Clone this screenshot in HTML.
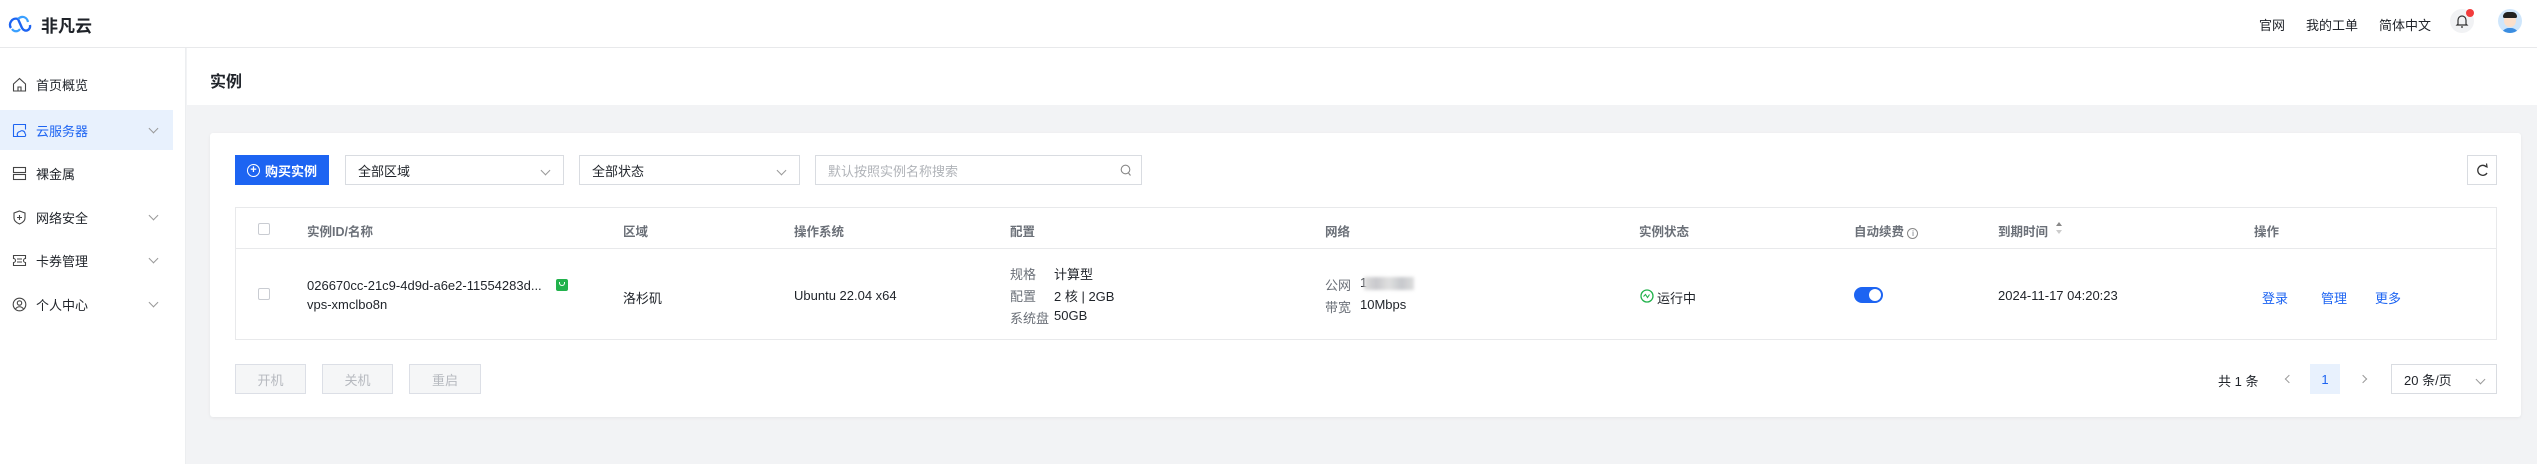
<!DOCTYPE html>
<html><head><meta charset="utf-8"><style>
*{box-sizing:border-box;margin:0;padding:0}
body{width:2537px;height:464px;overflow:hidden;background:#f2f3f5;font-family:"Liberation Sans","Noto Sans CJK SC",sans-serif;font-size:13px;color:#1f2329;position:relative}
.abs{position:absolute}
.hdr{left:0;top:0;width:2537px;height:48px;background:#fff;border-bottom:1px solid #e8e9eb}
.side{left:0;top:48px;width:186px;height:416px;background:#fff;border-right:1px solid #eceef0}
.nav{position:absolute;left:0;width:173px;height:40px;display:flex;align-items:center;padding-left:12px;font-size:13px;color:#1f2329}
.nav svg{margin-right:9px}
.chev{position:absolute;right:16px;top:15px;width:7px;height:7px;border-right:1px solid #999;border-bottom:1px solid #999;transform:rotate(45deg)}
.btn{position:absolute;border:1px solid #dcdfe6;background:#f5f6f7;color:#b6b9bf;display:flex;align-items:center;justify-content:center;font-size:13px}
.sel{position:absolute;top:155px;height:30px;border:1px solid #d9dce1;background:#fff;display:flex;align-items:center;padding-left:12px;font-size:13px}
.th{position:absolute;top:221px;color:#6b7078;font-size:12.5px;font-weight:bold}
.td{position:absolute;font-size:13px}
.lbl{color:#6b7078}
.cb{position:absolute;width:12px;height:12px;border:1px solid #c9ccd2;border-radius:2px;background:#fff}
.pg{position:absolute;width:6px;height:6px;border-left:1px solid #999;border-bottom:1px solid #999}
</style></head><body>
<div class="abs hdr">
  <svg class="abs" style="left:8px;top:14px" width="24" height="20" viewBox="0 0 24 20"><path d="M3 14c-3-4 1-11 7-9l4 9c3 5 9 2 8-3" fill="none" stroke="#1d64f2" stroke-width="2.4"/><path d="M10 5c4-4 9-2 10 3M4 15c2 3 6 3 8 0" fill="none" stroke="#3aa0ff" stroke-width="2.2"/></svg>
  <div class="abs" style="left:41px;top:12px;font-size:17px;font-weight:bold">非凡云</div>
  <div class="abs" style="left:2259px;top:15px;font-size:13px">官网</div>
  <div class="abs" style="left:2306px;top:15px;font-size:13px">我的工单</div>
  <div class="abs" style="left:2379px;top:15px;font-size:13px">简体中文</div>
  <div class="abs" style="left:2450px;top:9px;width:24px;height:24px;border-radius:12px;background:#f1f2f4"></div>
  <svg class="abs" style="left:2455px;top:13px" width="14" height="16" viewBox="0 0 14 16"><path d="M3 11V7a4 4 0 0 1 8 0v4l1 1H2zM6 14h2" fill="none" stroke="#333" stroke-width="1.2"/></svg>
  <div class="abs" style="left:2466px;top:9px;width:8px;height:8px;border-radius:4px;background:#f23c3c"></div>
  <div class="abs" style="left:2498px;top:9px;width:24px;height:24px;border-radius:12px;background:#cfe6fb;overflow:hidden">
    <div class="abs" style="left:6px;top:5px;width:12px;height:13px;border-radius:6px;background:#fbe0cc"></div>
    <div class="abs" style="left:5px;top:3px;width:14px;height:6px;border-radius:6px 6px 2px 2px;background:#222"></div>
    <div class="abs" style="left:3px;top:19px;width:18px;height:8px;border-radius:8px 8px 0 0;background:#3b8de0"></div>
  </div>
</div>
<div class="abs side">
  <div class="nav" style="top:16px"><svg width="15" height="15" viewBox="0 0 15 15"><path d="M1.5 7L7.5 1.5 13.5 7V14h-12zM6 14v-4h3v4" fill="none" stroke="#444" stroke-width="1.1"/></svg>首页概览</div>
  <div class="nav" style="top:62px;background:#e8f1fd;color:#1d64f2"><svg width="15" height="15" viewBox="0 0 15 15"><path d="M1.5 1.5h12v5M1.5 1.5v12h4" fill="none" stroke="#1d64f2" stroke-width="1.1"/><path d="M6 13.5a3 3 0 0 1 2-5 3 3 0 0 1 5 2 2 2 0 0 1 0 3z" fill="none" stroke="#1d64f2" stroke-width="1.1"/></svg>云服务器<span class="chev"></span></div>
  <div class="nav" style="top:105px"><svg width="15" height="15" viewBox="0 0 15 15"><rect x="1.5" y="1.5" width="12" height="5" fill="none" stroke="#444" stroke-width="1.1"/><rect x="1.5" y="8.5" width="12" height="5" fill="none" stroke="#444" stroke-width="1.1"/></svg>裸金属</div>
  <div class="nav" style="top:149px"><svg width="15" height="15" viewBox="0 0 15 15"><path d="M7.5 1L13 3v5c0 3-3 5-5.5 6C5 13 2 11 2 8V3z M7.5 5v5M5 7.5h5" fill="none" stroke="#444" stroke-width="1.1"/></svg>网络安全<span class="chev"></span></div>
  <div class="nav" style="top:192px"><svg width="15" height="15" viewBox="0 0 15 15"><path d="M1.5 2.5h12v3a2 2 0 0 0 0 4v3h-12v-3a2 2 0 0 0 0-4zM5 6h5M5 9h5" fill="none" stroke="#444" stroke-width="1.1"/></svg>卡券管理<span class="chev"></span></div>
  <div class="nav" style="top:236px"><svg width="15" height="15" viewBox="0 0 15 15"><circle cx="7.5" cy="7.5" r="6.3" fill="none" stroke="#444" stroke-width="1.1"/><circle cx="7.5" cy="6" r="2.2" fill="none" stroke="#444" stroke-width="1.1"/><path d="M3.5 12c2-3 6-3 8 0" fill="none" stroke="#444" stroke-width="1.1"/></svg>个人中心<span class="chev"></span></div>
</div>
<div class="abs" style="left:187px;top:48px;width:2350px;height:57px;background:#fff"></div>
<div class="abs" style="left:210px;top:68px;font-size:16px;font-weight:bold">实例</div>
<div class="abs" style="left:210px;top:133px;width:2311px;height:284px;background:#fff;border-radius:3px;box-shadow:0 1px 3px rgba(0,0,0,.06)"></div>
<div class="abs" style="left:235px;top:155px;width:94px;height:30px;background:#1d64f2;color:#fff;font-weight:bold;display:flex;align-items:center;justify-content:center;font-size:13px"><span style="width:13px;height:13px;border:1.3px solid #fff;border-radius:7px;display:inline-flex;align-items:center;justify-content:center;font-size:11px;margin-right:5px;line-height:1">+</span>购买实例</div>
<div class="sel" style="left:345px;width:219px">全部区域<span class="chev" style="top:11px;right:14px"></span></div>
<div class="sel" style="left:579px;width:221px">全部状态<span class="chev" style="top:11px;right:14px"></span></div>
<div class="sel" style="left:815px;width:327px;color:#b0b3b8">默认按照实例名称搜索
  <svg class="abs" style="right:9px;top:8px" width="12" height="13" viewBox="0 0 12 13"><circle cx="5.5" cy="5.5" r="4.3" fill="none" stroke="#888" stroke-width="1.1"/><path d="M8.5 9l2 2.5" stroke="#888" stroke-width="1.1"/></svg></div>
<div class="abs" style="left:2467px;top:155px;width:30px;height:30px;border:1px solid #d9dce1;background:#fff"><svg class="abs" style="left:8px;top:7px" width="13" height="15" viewBox="0 0 13 15"><path d="M10.5 4A5 5 0 1 0 11 10" fill="none" stroke="#333" stroke-width="1.3"/><path d="M8 2.5l3 1.5-.5-3.5" fill="none" stroke="#333" stroke-width="1.2"/></svg></div>
<div class="abs" style="left:235px;top:207px;width:2262px;height:133px;border:1px solid #e8e9eb"></div>
<div class="abs" style="left:235px;top:248px;width:2262px;height:1px;background:#e8e9eb"></div>
<div class="cb" style="left:258px;top:223px"></div>
<div class="th" style="left:307px">实例ID/名称</div>
<div class="th" style="left:623px">区域</div>
<div class="th" style="left:794px">操作系统</div>
<div class="th" style="left:1010px">配置</div>
<div class="th" style="left:1325px">网络</div>
<div class="th" style="left:1639px">实例状态</div>
<div class="th" style="left:1854px">自动续费 <span style="display:inline-block;width:11px;height:11px;border:1px solid #888;border-radius:6px;font-size:8px;text-align:center;line-height:9px;font-weight:normal">i</span></div>
<div class="th" style="left:1998px">到期时间</div>
<svg class="abs" style="left:2056px;top:222px" width="6" height="12" viewBox="0 0 6 12"><path d="M3 0L6 4H0z" fill="#888"/><path d="M3 12L6 8H0z" fill="#ccc"/></svg>
<div class="th" style="left:2254px">操作</div>
<div class="cb" style="left:258px;top:288px"></div>
<div class="td" style="left:307px;top:278px">026670cc-21c9-4d9d-a6e2-11554283d...</div>
<div class="abs" style="left:556px;top:279px;width:12px;height:12px;background:#22b24c;border-radius:2px"><div class="abs" style="left:3px;top:3px;width:6px;height:4px;border:1.3px solid #fff;border-top:none;border-radius:0 0 3px 3px"></div></div>
<div class="td" style="left:307px;top:297px">vps-xmclbo8n</div>
<div class="td" style="left:623px;top:288px">洛杉矶</div>
<div class="td" style="left:794px;top:288px">Ubuntu 22.04 x64</div>
<div class="td lbl" style="left:1010px;top:264px">规格</div><div class="td" style="left:1054px;top:264px">计算型</div>
<div class="td lbl" style="left:1010px;top:286px">配置</div><div class="td" style="left:1054px;top:286px">2 核 | 2GB</div>
<div class="td lbl" style="left:1010px;top:308px">系统盘</div><div class="td" style="left:1054px;top:308px">50GB</div>
<div class="td lbl" style="left:1325px;top:275px">公网</div><div class="td" style="left:1360px;top:275px">1</div>
<div class="abs" style="left:1364px;top:277px;width:50px;height:13px;background:linear-gradient(90deg,#ddd,#c8c8cc,#e0e0e0,#c6c8cc,#ddd);filter:blur(1.5px)"></div>
<div class="td lbl" style="left:1325px;top:297px">带宽</div><div class="td" style="left:1360px;top:297px">10Mbps</div>
<svg class="abs" style="left:1640px;top:289px" width="14" height="14" viewBox="0 0 14 14"><circle cx="7" cy="7" r="6" fill="none" stroke="#22b24c" stroke-width="1.3"/><path d="M3.5 7.5l2-2 2 3 2-3" fill="none" stroke="#22b24c" stroke-width="1.1"/></svg>
<div class="td" style="left:1657px;top:288px">运行中</div>
<div class="abs" style="left:1854px;top:287px;width:29px;height:16px;border-radius:8px;background:#1d64f2"><div class="abs" style="left:15px;top:2px;width:12px;height:12px;border-radius:6px;background:#fff"></div></div>
<div class="td" style="left:1998px;top:288px">2024-11-17 04:20:23</div>
<div class="td" style="left:2262px;top:288px;color:#1d64f2">登录</div>
<div class="td" style="left:2321px;top:288px;color:#1d64f2">管理</div>
<div class="td" style="left:2375px;top:288px;color:#1d64f2">更多</div>
<div class="btn" style="left:235px;top:364px;width:71px;height:30px">开机</div>
<div class="btn" style="left:322px;top:364px;width:71px;height:30px">关机</div>
<div class="btn" style="left:409px;top:364px;width:72px;height:30px">重启</div>
<div class="td" style="left:2218px;top:371px">共 1 条</div>
<div class="pg" style="left:2286px;top:376px;transform:rotate(45deg)"></div>
<div class="abs" style="left:2310px;top:364px;width:30px;height:30px;background:#e8f1fd;color:#1d64f2;display:flex;align-items:center;justify-content:center">1</div>
<div class="pg" style="left:2360px;top:376px;transform:rotate(-135deg)"></div>
<div class="sel" style="left:2391px;top:364px;width:106px">20 条/页<span class="chev" style="top:11px;right:12px"></span></div>
</body></html>
